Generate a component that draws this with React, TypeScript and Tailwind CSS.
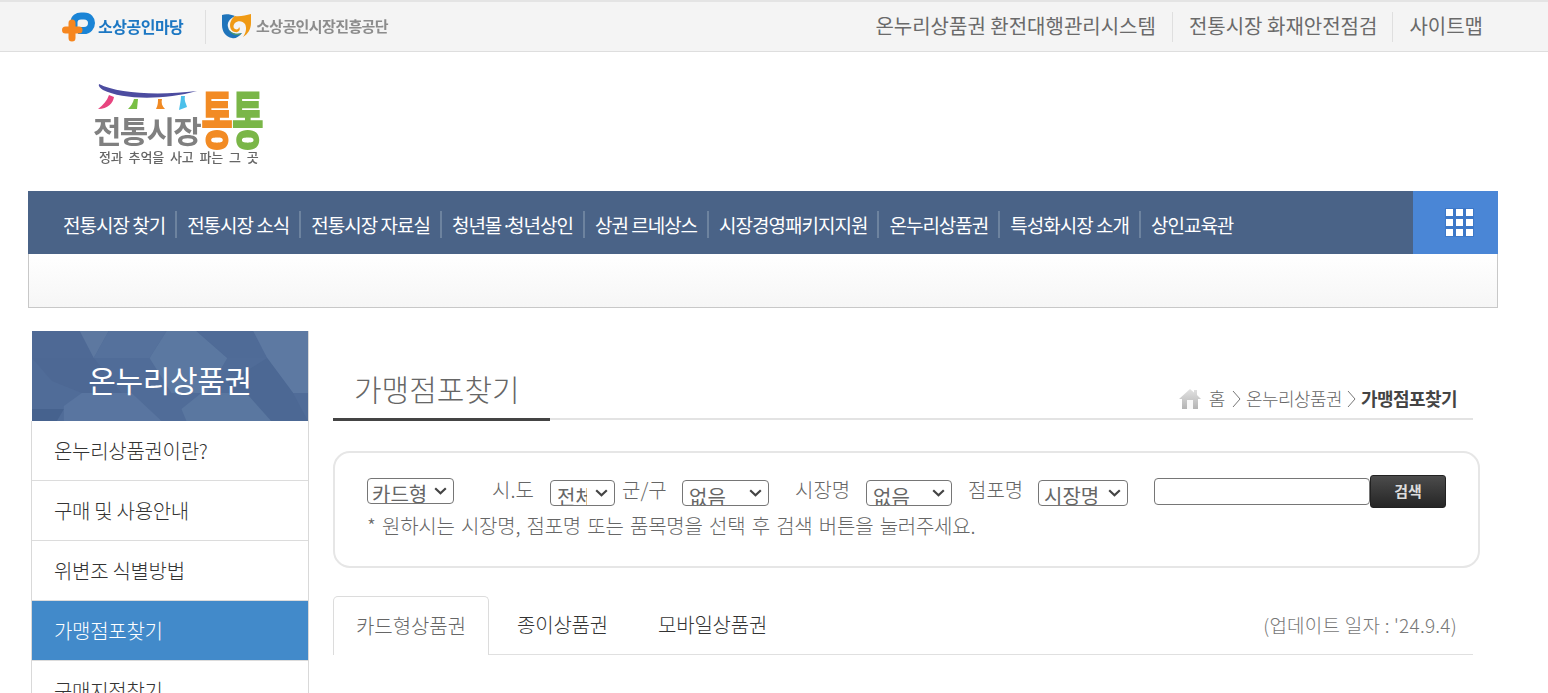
import React from "react";

const FONT = "font-['Noto_Sans_CJK_KR','Noto_Sans',sans-serif]";

const navItems = ["전통시장 찾기", "전통시장 소식", "전통시장 자료실", "청년몰·청년상인", "상권 르네상스", "시장경영패키지지원", "온누리상품권", "특성화시장 소개", "상인교육관"];
const sideItems = ["온누리상품권이란?", "구매 및 사용안내", "위변조 식별방법", "가맹점포찾기", "구매지점찾기"];

function Sel({ v, cls }: { v: string; cls: string }) {
  return (
    <div className="relative">
      <select defaultValue={v} className={`${cls} block h-[26px] appearance-none overflow-hidden rounded-[4px] border border-[#767676] bg-white text-[20px] text-[#666]`}>
        <option>{v}</option>
      </select>
      <svg width="13" height="8" viewBox="0 0 13 8" className="pointer-events-none absolute right-[7px] top-[9px]">
        <path d="M1.2 1.2 L6.5 6.2 L11.8 1.2" fill="none" stroke="#444" strokeWidth="2.2" />
      </svg>
    </div>
  );
}

function MaDangLogo() {
  return (
    <svg width="34" height="30" viewBox="0 0 34 30" className="shrink-0">
      <path d="M12 18 V10.5 C12 6 15.5 4 19 4 H22 C27 4 29.5 7.5 29.5 11 C29.5 15 26.5 18.5 22 18.5 H16" fill="none" stroke="#1a84d6" strokeWidth="7" />
      <path d="M3.5 18 H17 M10 11 V26" fill="none" stroke="#f6861f" strokeWidth="7" strokeLinecap="round" />
    </svg>
  );
}

function SemasLogo() {
  return (
    <svg width="29" height="25" viewBox="0 0 29 25" className="shrink-0">
      <path d="M0 1 C3 0 8 0 13 2 C7 5 5 9 6 13 C7 19 14 21 20 19 C17 23 13 25 10 24 C4 23 0 18 0 11Z" fill="#1f74bb" />
      <path d="M13 2 C18 3 24 1 29 0 V9 C29 15 26 20 21 23 C24 19 25 14 23 10 C21 7 16 6 13 9 C11 11 11 14 13 15 C15 16 17 15 17 13 C19 15 17 19 13 18 C8 17 7 11 9 7 C10 5 11 3 13 2Z" fill="#f09a14" />
      <path d="M6 13 C7 19 14 21 20 19 C16 23 11 21 8 18Z" fill="#4e9a6b" />
    </svg>
  );
}

function Garland() {
  return (
    <svg width="104" height="30" viewBox="0 0 104 30" className="block">
      <path d="M6 0 C24 9 62 12 104 7 C72 16 30 16 10 6 C7 4 5 2 6 0Z" fill="#4c4ca0" />
      <path d="M16 11 L21 13 C20 19 15 25 5 25 C10 21 14 17 16 11Z" fill="#e8447f" />
      <path d="M41 15 L45 15 L44 25 L35 25 C38 22 40 19 41 15Z" fill="#79bf45" />
      <path d="M65 15 L69 15 C68 19 69 22 72 25 L63 25 C65 21 65 18 65 15Z" fill="#f08a24" />
      <path d="M88 12 L92 12 C91 17 93 19 94 23 L86 26 C87 20 88 16 88 12Z" fill="#4cc0ea" />
    </svg>
  );
}

function HexBg() {
  return (
    <svg viewBox="0 0 277 90" preserveAspectRatio="none" className="absolute inset-0 h-full w-full">
      <rect width="277" height="90" fill="#506c98" />
      <polygon points="0,0 48,0 62,27 0,27" fill="#4e6995" />
      <polygon points="48,0 77,0 62,27" fill="#5d78a0" />
      <polygon points="118,27 135,0 165,0 196,27 175,62 140,62" fill="#5b78a1" />
      <polygon points="77,0 135,0 118,27 62,27" fill="#55719c" />
      <polygon points="165,0 222,0 236,27 196,27" fill="#4f6b97" />
      <polygon points="222,0 277,0 277,62 262,62 236,27" fill="#5d79a2" />
      <polygon points="236,27 262,62 277,90 222,90 196,52" fill="#4c6894" />
      <polygon points="32,75 50,62 100,62 130,90 32,90" fill="#5975a0" />
      <polygon points="0,78 32,78 25,90 0,90" fill="#46628e" />
      <polygon points="150,78 170,62 215,62 240,90 155,90" fill="#5a77a0" />
      <polygon points="0,27 62,27 90,62 50,62 20,50" fill="#4d6894" />
    </svg>
  );
}

function Crumb() {
  return (
    <svg width="9" height="18" viewBox="0 0 9 18" className="mx-[5px] shrink-0">
      <path d="M1 1 L8 9 L1 17" fill="none" stroke="#777" strokeWidth="1" />
    </svg>
  );
}

function NavLabel({ text }: { text: string }) {
  const parts = text.split("·");
  if (parts.length === 1) return <>{text}</>;
  return (
    <>
      {parts[0]}
      <span className="tracking-[-5px]">·</span>
      {parts[1]}
    </>
  );
}

export default function App() {
  return (
    <div className={`${FONT} relative h-[693px] w-full overflow-hidden bg-white text-[#333]`}>
      {/* Top utility bar */}
      <div className="flex h-[52px] items-center justify-between border-t-2 border-b border-t-[#e4e4e4] border-b-[#dedede] bg-[#f4f4f4] pl-[62px] pr-[65px]">
        <div className="flex items-center">
          <div className="flex w-[143px] items-center gap-[2px]">
            <MaDangLogo />
            <span className="-mt-[2px] text-[16px] font-bold tracking-[-0.5px] text-[#1c77c3] blur-[0.3px]">소상공인마당</span>
          </div>
          <div className="h-[34px] w-px bg-[#dfdfdf]" />
          <div className="ml-[16px] flex items-center gap-[5px]">
            <SemasLogo />
            <span className="-mt-[1px] text-[15px] font-bold tracking-[-0.6px] text-[#8c8c8c] blur-[0.3px]">소상공인시장진흥공단</span>
          </div>
        </div>
        <div className="flex items-center text-[20px] text-[#6a6a6a]">
          <span className="-mt-[1px] pr-[16px]">온누리상품권 환전대행관리시스템</span>
          <span className="h-[30px] w-px bg-[#dfdfdf]" />
          <span className="-mt-[1px] pl-[16px] pr-[15px]">전통시장 화재안전점검</span>
          <span className="h-[30px] w-px bg-[#dfdfdf]" />
          <span className="-mt-[1px] pl-[16px]">사이트맵</span>
        </div>
      </div>

      {/* Site logo */}
      <div className="h-[139px] pl-[93px] pt-[32px]">
        <div className="relative h-[85px] w-[175px] blur-[0.3px]">
          <Garland />
          <span className="absolute left-0 top-[31px] text-[31px] font-bold leading-[30px] tracking-[-1.8px] text-[#808080]">전통시장</span>
          <div className="absolute left-[108px] top-[15px] flex origin-center scale-y-[1.8] text-[35px] font-black leading-[34px] tracking-[-1.5px]">
            <span className="text-[#f28b24]">통</span>
            <span className="text-[#7ab648]">통</span>
          </div>
          <span className="absolute left-[6px] top-[66px] whitespace-nowrap text-[13px] font-medium leading-[14px] tracking-[-0.1px] text-[#666] [word-spacing:3px]">정과 추억을 사고 파는 그 곳</span>
        </div>
      </div>

      {/* Main nav */}
      <div className="mx-[28px] w-[1470px]">
        <div className="flex h-[63px] items-center justify-between bg-[#4a6387]">
          <div className="flex items-center pl-[25px] pt-[4px] text-[19px] tracking-[-1px] text-white">
            {navItems.map((n, i) => (
              <React.Fragment key={n}>
                {i > 0 && <span className="h-[27px] w-[2px] bg-[#6d839f]" />}
                <span className="px-[10px] leading-[27px]"><NavLabel text={n} /></span>
              </React.Fragment>
            ))}
          </div>
          <div className="flex h-full w-[85px] items-center justify-center bg-[#4a86d6] pl-[7px]">
            <div className="grid grid-cols-3 gap-[3px] bg-[#3d78c8] p-[1px]">
              {Array.from({ length: 9 }).map((_, i) => (
                <span key={i} className="h-[7px] w-[7px] bg-white" />
              ))}
            </div>
          </div>
        </div>
        <div className="h-[54px] border border-t-0 border-[#c8c8c8] bg-gradient-to-b from-white to-[#f6f6f6]" />
      </div>

      {/* Body */}
      <div className="mt-[23px] flex pl-[31px]">
        <aside className="w-[278px] shrink-0 border-r border-[#d9d9d9]">
          <div className="relative ml-px flex h-[90px] items-center justify-center overflow-hidden pt-[6px] text-[30px] tracking-[-0.35px] text-white">
            <HexBg />
            <span className="relative">온누리상품권</span>
          </div>
          <ul className="border-l border-[#d9d9d9]">
            {sideItems.map((s, i) => (
              <li key={s} className={`flex h-[60px] items-center border-b border-[#dcdcdc] pl-[22px] text-[20px] font-light tracking-[-0.3px] ${i === 3 ? "bg-[#428aca] text-white" : "text-[#333]"}`}>
                {s}
              </li>
            ))}
          </ul>
        </aside>

        <main className="ml-[24px] w-[1147px]">
          {/* Title row */}
          <div className="relative flex h-[89px] w-[1140px] items-end justify-between border-b-2 border-[#e3e3e3]">
            <h2 className="relative -mb-[3px] flex h-[60px] w-[217px] items-start border-b-[3px] border-[#444] pl-[21px] text-[30px] font-light leading-[54px] text-[#666]">가맹점포찾기</h2>
            <div className="mb-[6px] mr-[16px] flex items-center text-[18px] font-light tracking-[-0.55px] text-[#666]">
              <svg width="22" height="22" viewBox="0 0 22 22" className="mr-[8px]">
                <defs>
                  <linearGradient id="house" x1="0" y1="0" x2="0" y2="1">
                    <stop offset="0" stopColor="#e2e2e2" />
                    <stop offset="1" stopColor="#b4b4b4" />
                  </linearGradient>
                </defs>
                <path d="M11 1 L15 4.5 V2 H18 V7 L22 11 H19 V21 H3 V11 H0Z" fill="url(#house)" />
                <path d="M8 12 H14 V21 H8Z" fill="#f8f8f8" />
              </svg>
              <span className="mr-[2px]">홈</span>
              <Crumb />
              <span>온누리상품권</span>
              <Crumb />
              <b className="font-bold text-[#444]">가맹점포찾기</b>
            </div>
          </div>

          {/* Search box */}
          <div className="mt-[31px] h-[117px] rounded-[17px] border-2 border-[#e6e6e6] px-[32px] pt-[22px] text-[20px] text-[#666]">
            <div className="flex h-[36px] items-start">
              <div className="mt-[3px]"><Sel v="카드형" cls="w-[87px] pl-[4px] pr-[24px]" /></div>
              <span className="ml-[38px] w-[42px] shrink-0 whitespace-nowrap font-light">시.도</span>
              <div className="ml-[16px] mt-[5px]"><Sel v="전체" cls="w-[65px] pl-[6px] pr-[27px] pt-[1px]" /></div>
              <span className="ml-[7px] w-[44px] shrink-0 whitespace-nowrap font-light">군/구</span>
              <div className="ml-[16px] mt-[5px]"><Sel v="없음" cls="w-[87px] pl-[6px] pr-[24px] pt-[1px]" /></div>
              <span className="ml-[26px] w-[55px] shrink-0 whitespace-nowrap font-light">시장명</span>
              <div className="ml-[16px] mt-[5px]"><Sel v="없음" cls="w-[86px] pl-[6px] pr-[24px] pt-[1px]" /></div>
              <span className="ml-[16px] w-[54px] shrink-0 whitespace-nowrap font-light">점포명</span>
              <div className="ml-[16px] mt-[5px]"><Sel v="시장명" cls="w-[90px] pl-[5px] pr-[24px]" /></div>
              <input className="ml-[26px] mt-[3px] h-[27px] w-[216px] shrink-0 rounded-[4px] border border-[#767676] bg-white" />
              <button className="flex h-[33px] w-[76px] shrink-0 items-center justify-center rounded-[3px] border border-[#222] bg-gradient-to-b from-[#4c4c4c] to-[#262626] text-[15px] font-bold text-[#ddd]">검색</button>
            </div>
            <p className="pl-0 text-[20px] font-light leading-[30px] tracking-[-0.25px] [word-spacing:2.2px]">* 원하시는 시장명, 점포명 또는 품목명을 선택 후 검색 버튼을 눌러주세요.</p>
          </div>

          {/* Tabs */}
          <div className="mt-[28px] flex h-[59px] w-[1140px] items-end justify-between border-b border-[#e0e0e0]">
            <div className="flex items-end">
              <div className="-mb-px flex h-[59px] w-[156px] items-center justify-center rounded-t-[5px] border border-b-0 border-[#dcdcdc] bg-white text-[20px] font-light tracking-[-0.05px] text-[#666]">카드형상품권</div>
              <div className="flex h-[58px] items-center pl-[28px] text-[20px] font-light tracking-[-0.2px] text-[#333]">종이상품권</div>
              <div className="flex h-[58px] items-center pl-[50px] text-[20px] font-light tracking-[-0.2px] text-[#333]">모바일상품권</div>
            </div>
            <div className="flex h-[58px] items-center pr-[16px] text-[19px] font-light tracking-[0.25px] text-[#777]">(업데이트 일자 : '24.9.4)</div>
          </div>
        </main>
      </div>
    </div>
  );
}
